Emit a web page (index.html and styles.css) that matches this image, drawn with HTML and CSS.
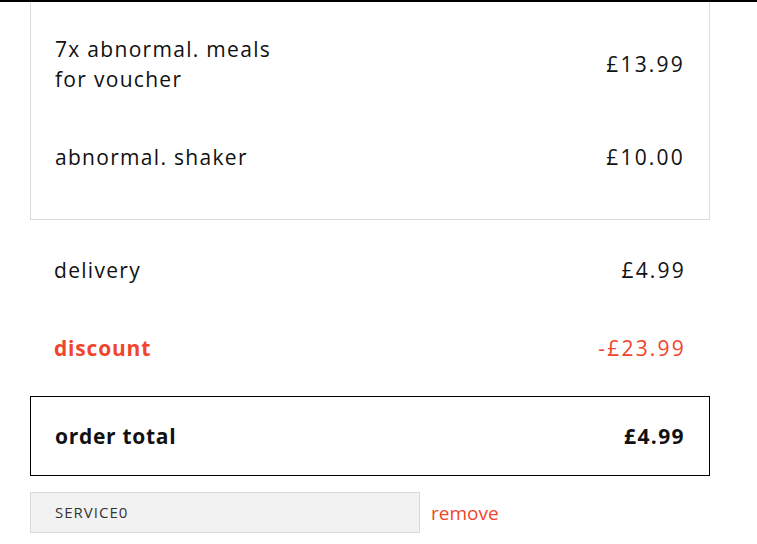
FILE: index.html
```html
<!DOCTYPE html>
<html lang="en">

<head>
    <meta charset="UTF-8">
    <meta name="viewport" content="width=device-width, initial-scale=1.0">
    <title>Basket</title>
    <link rel="stylesheet" href="styles.css">
</head>

<body>
    <div class="top-bar"></div>

    <div class="basket">
        <div class="items">
            <div class="row">
                <span class="name">7x abnormal. meals<br>for voucher</span>
                <span class="price">£13.99</span>
            </div>
            <div class="row">
                <span class="name">abnormal. shaker</span>
                <span class="price">£10.00</span>
            </div>
        </div>

        <div class="summary">
            <div class="row">
                <span>delivery</span>
                <span class="price">£4.99</span>
            </div>
            <div class="row discount">
                <span class="label">discount</span>
                <span class="price">-£23.99</span>
            </div>
        </div>

        <div class="row total">
            <span>order total</span>
            <span class="price">£4.99</span>
        </div>

        <div class="voucher">
            <div class="code">SERVICE0</div>
            <a class="remove" href="#">remove</a>
        </div>
    </div>
</body>

</html>
```

FILE: styles.css
```css
body {
    margin: 0;
    font-family: 'Open Sans', 'Liberation Sans', sans-serif;
    color: #111;
    background: #fff;
}

.top-bar {
    height: 2px;
    background: #000;
}

.basket {
    width: 680px;
    margin-left: 30px;
}

.row {
    display: flex;
    justify-content: space-between;
    align-items: center;
    padding: 24px 24px;
    font-size: 21px;
    line-height: 30px;
    letter-spacing: 1.3px;
}

.price {
    letter-spacing: 2.2px;
    margin-right: 0;
}

.items {
    border: 1px solid #dcdcdc;
    border-top: none;
    padding: 8px 0 23px;
}

.summary {
    padding-top: 11px;
}

.discount {
    color: #f0452c;
}

.discount .label {
    font-weight: 700;
    letter-spacing: 0.8px;
}

.total {
    margin-top: 9px;
    border: 1px solid #000;
    font-weight: 700;
    letter-spacing: 0.7px;
}

.total .price {
    letter-spacing: 1.4px;
}

.voucher {
    display: flex;
    align-items: center;
    margin-top: 16px;
    gap: 11px;
}

.code {
    width: 364px;
    height: 39px;
    line-height: 39px;
    padding-left: 24px;
    background: #f2f2f2;
    border: 1px solid #d9d9d9;
    font-size: 15px;
    letter-spacing: 1px;
    color: #333;
}

.remove {
    color: #f0452c;
    font-size: 19px;
    text-decoration: none;
}
```
